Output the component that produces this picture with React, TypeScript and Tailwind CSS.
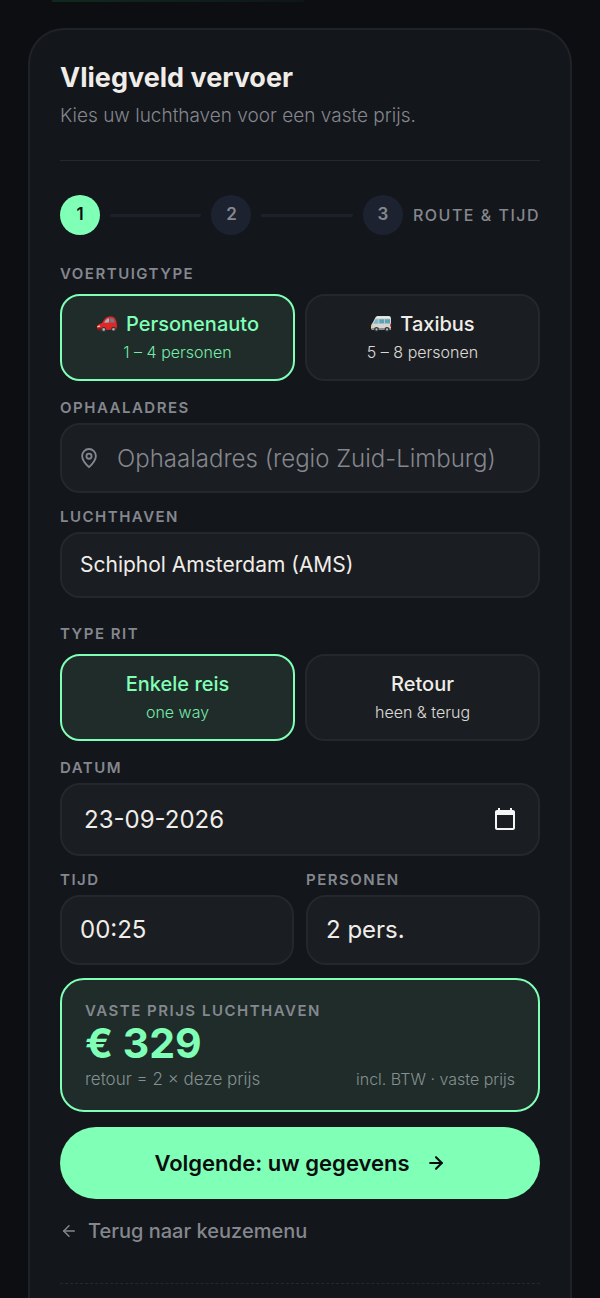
import React, { useState } from 'react';
import { ArrowLeft, ArrowRight } from 'lucide-react';

const airports = ['Schiphol Amsterdam (AMS)', 'Maastricht Aachen (MST)', 'Eindhoven (EIN)', 'Brussel (BRU)', 'Düsseldorf (DUS)'];
const times = ['00:25', '00:30', '00:35', '00:40'];
const labelClass = 'text-[15px] leading-5 font-semibold uppercase tracking-[1.5px] text-[#85878e]';
const fieldClass = 'w-full rounded-[20px] border-2 border-[#24272d] bg-[#1a1d22] text-[#f0ede8] outline-none focus:border-[#80ffb6]';

const PinIcon = () => (
  <svg
    viewBox="0 0 24 24"
    className="absolute top-6 left-[18px] h-[22px] w-[22px] text-[#85878e]"
    fill="none"
    stroke="currentColor"
    strokeWidth="2"
    aria-hidden="true"
  >
    <path d="M12 22s7.500-7.200 7.500-12.300a7.500 7.500 0 0 0-15 0C4.500 14.800 12 22 12 22z" strokeLinejoin="round" />
    <circle cx="12" cy="10" r="2.800" />
  </svg>
);

const CarIcon = () => (
  <svg viewBox="0 0 22 18" className="h-[18px] w-[22px]" aria-hidden="true">
    <path d="M1 12c.2-2.300 2.200-3.400 4.800-3.800C7.600 5.300 9.300 2.600 11.500 1.900c2.500-.7 5.300-.5 6.700.6 1.500 1.500 2.600 4.300 2.700 7.400 0 2-.2 3.800-.9 4.600L3 15.200c-1.500-.3-2.200-1.600-2-3.200z" fill="#e02626" />
    <path d="M8.300 7.800c.8-2 2-3.700 3.300-4.300l1.500-.3v4.400z" fill="#9fb4be" />
    <path d="M14.200 3.200c1.300-.1 2.600.1 3.300.7.700 1 1.200 2.300 1.400 3.500l-4.700.2z" fill="#6b7f8c" />
    <path d="M1.300 11l2.500-.5.4 1.300-2.900.5z" fill="#ffd9b8" />
    <path d="M1 13.300h4v1.800H2.500z" fill="#7d1719" />
    <circle cx="7.700" cy="14.500" r="2.600" fill="#33363a" />
    <circle cx="7.700" cy="14.500" r="1.400" fill="#a9adb0" />
    <circle cx="17.500" cy="14.200" r="2.400" fill="#33363a" />
    <circle cx="17.500" cy="14.200" r="1.300" fill="#a9adb0" />
  </svg>
);

const VanIcon = () => (
  <svg viewBox="0 0 22 18" className="h-[18px] w-[22px]" aria-hidden="true">
    <path d="M1 13c-.2-2 .3-3.700 1.500-5L5 3.200C5.500 1.800 6.500 1.200 8 1.200h11c1.300 0 2 .7 2 2V14l-1 1H3c-1.200 0-1.900-.7-2-2z" fill="#d6d5d2" />
    <path d="M3.300 8.800l2.200-4.600h3v4.600z" fill="#7fb9c8" />
    <path d="M9.300 4.200h4.900v4.200H9.300zM14.900 4.200H20v4.200h-5.100z" fill="#5ba3b5" />
    <path d="M7 1.200h12.500l.8 1.500H6z" fill="#f2f0ec" />
    <path d="M20 8.800h1.200v3H20z" fill="#de3434" />
    <path d="M1 10.200h1.800v1.600H1z" fill="#ffb35c" />
    <path d="M1 13h19.800v1.500L20 15H2.500z" fill="#8b8d8f" />
    <circle cx="6.500" cy="14.400" r="2.400" fill="#303336" />
    <circle cx="6.500" cy="14.400" r="1.100" fill="#b6babd" />
    <circle cx="17" cy="14.400" r="2.400" fill="#303336" />
    <circle cx="17" cy="14.400" r="1.100" fill="#b6babd" />
  </svg>
);

interface ChoiceProps {
  title: string;
  detail: string;
  icon?: React.ReactNode;
  active: boolean;
  onSelect: () => void;
}

const Choice: React.FC<ChoiceProps> = ({ title, detail, icon, active, onSelect }) => (
  <button
    type="button"
    aria-pressed={active}
    onClick={onSelect}
    className={`flex flex-1 flex-col items-center rounded-[20px] border-2 py-[13px] ${
      active ? 'border-[#80ffb6] bg-[#1f2c2a] text-[#80ffb6]' : 'border-[#24272d] bg-[#1a1d22] text-[#f0ede8]'
    }`}
  >
    <span className="flex items-center gap-2 text-[20px] leading-[30px] font-medium">
      {icon}
      {title}
    </span>
    <span className="text-[16px] leading-[27px] font-light opacity-90">{detail}</span>
  </button>
);

interface StepProps {
  number: number;
  active?: boolean;
}

const Step: React.FC<StepProps> = ({ number, active }) => (
  <span
    className={`flex h-10 w-10 shrink-0 items-center justify-center rounded-full text-[17px] font-semibold ${
      active ? 'bg-[#80ffb6] text-[#0b0d10]' : 'bg-[#1d2230] text-[#85878e]'
    }`}
  >
    {number}
  </span>
);

export default function App() {
  const [vehicle, setVehicle] = useState<'auto' | 'bus'>('auto');
  const [trip, setTrip] = useState<'single' | 'return'>('single');
  const [address, setAddress] = useState('');
  const [airport, setAirport] = useState(airports[0]);
  const [date, setDate] = useState('23-09-2026');
  const [time, setTime] = useState('00:25');
  const [persons, setPersons] = useState('2');

  return (
    <div className="flex min-h-screen flex-col bg-[#0d0e12] font-['Inter','Liberation_Sans',sans-serif]">
      <div className="ml-[52px] h-[2px] w-[42%] bg-linear-to-r from-[#10291f] to-[#0d1716]" />
      <main className="mx-7 mt-[26px] flex-1 rounded-t-[36px] border-2 border-b-0 border-[#1f2228] bg-[#13161b] px-[30px] pt-[30px]">
        <h1 className="text-[27px] leading-9 font-bold text-[#f0ede8]">Vliegveld vervoer</h1>
        <p className="mt-1 text-[19px] leading-8 font-light text-[#85878e]">Kies uw luchthaven voor een vaste prijs.</p>
        <hr className="mt-7 border-[#25282d]" />

        <div className="mt-[34px] flex items-center gap-[10px]">
          <Step number={1} active />
          <span className="h-[3px] flex-1 rounded bg-[#1d212b]" />
          <Step number={2} />
          <span className="h-[3px] flex-1 rounded bg-[#1d212b]" />
          <Step number={3} />
          <span className="text-[16px] leading-5 font-medium tracking-[1.5px] text-[#85878e] uppercase">Route &amp; tijd</span>
        </div>

        <form onSubmit={(e) => e.preventDefault()}>
          <div className="mt-[29px] flex flex-col gap-[10px]" role="group" aria-labelledby="vehicle-label">
            <span id="vehicle-label" className={labelClass}>Voertuigtype</span>
            <div className="flex gap-[10px]">
              <Choice title="Personenauto" detail="1 – 4 personen" icon={<CarIcon />} active={vehicle === 'auto'} onSelect={() => setVehicle('auto')} />
              <Choice title="Taxibus" detail="5 – 8 personen" icon={<VanIcon />} active={vehicle === 'bus'} onSelect={() => setVehicle('bus')} />
            </div>
          </div>

          <div className="mt-[17px] flex flex-col gap-[5px]">
            <label htmlFor="address" className={labelClass}>Ophaaladres</label>
            <div className="relative">
              <PinIcon />
              <input
                id="address"
                type="text"
                value={address}
                onChange={(e) => setAddress(e.target.value)}
                placeholder="Ophaaladres (regio Zuid-Limburg)"
                className={`${fieldClass} h-[70px] pr-4 pl-[55px] text-[24px] font-light placeholder:text-[#85878e]`}
              />
            </div>
          </div>

          <div className="mt-[14px] flex flex-col gap-[5px]">
            <label htmlFor="airport" className={labelClass}>Luchthaven</label>
            <select
              id="airport"
              value={airport}
              onChange={(e) => setAirport(e.target.value)}
              className={`${fieldClass} h-[66px] appearance-none px-[18px] text-[21px]`}
            >
              {airports.map((name) => (
                <option key={name}>{name}</option>
              ))}
            </select>
          </div>

          <div className="mt-[26px] flex flex-col gap-[10px]" role="group" aria-labelledby="trip-label">
            <span id="trip-label" className={labelClass}>Type rit</span>
            <div className="flex gap-[10px]">
              <Choice title="Enkele reis" detail="one way" active={trip === 'single'} onSelect={() => setTrip('single')} />
              <Choice title="Retour" detail="heen & terug" active={trip === 'return'} onSelect={() => setTrip('return')} />
            </div>
          </div>

          <div className="mt-[17px] flex flex-col gap-[5px]">
            <label htmlFor="date" className={labelClass}>Datum</label>
            <div className="relative">
              <input
                id="date"
                type="text"
                inputMode="numeric"
                value={date}
                onChange={(e) => setDate(e.target.value)}
                className={`${fieldClass} h-[73px] pr-16 pl-[22px] text-[24px]`}
              />
              <button type="button" aria-label="Kies datum" className="absolute top-6 right-[23px] text-[#f5f5f5]">
                <svg viewBox="0 0 24 24" className="h-6 w-6" fill="currentColor">
                  <path d="M20 3h-1V1h-2v2H7V1H5v2H4c-1.100 0-2 .9-2 2v16c0 1.100.9 2 2 2h16c1.100 0 2-.9 2-2V5c0-1.100-.9-2-2-2zm0 18H4V8h16v13z" />
                </svg>
              </button>
            </div>
          </div>

          <div className="mt-[14px] flex gap-3">
            <div className="flex flex-1 flex-col gap-[5px]">
              <label htmlFor="time" className={labelClass}>Tijd</label>
              <select
                id="time"
                value={time}
                onChange={(e) => setTime(e.target.value)}
                className={`${fieldClass} h-[70px] appearance-none px-[18px] text-[24px]`}
              >
                {times.map((t) => (
                  <option key={t}>{t}</option>
                ))}
              </select>
            </div>
            <div className="flex flex-1 flex-col gap-[5px]">
              <label htmlFor="persons" className={labelClass}>Personen</label>
              <select
                id="persons"
                value={persons}
                onChange={(e) => setPersons(e.target.value)}
                className={`${fieldClass} h-[70px] appearance-none px-[18px] text-[24px]`}
              >
                {['1', '2', '3', '4'].map((n) => (
                  <option key={n} value={n}>{n} pers.</option>
                ))}
              </select>
            </div>
          </div>

          <div className="mt-[13px] rounded-3xl border-2 border-[#80ffb6] bg-[#1f2c2a] px-[23px] pt-[21px] pb-[17px]">
            <p className={labelClass}>Vaste prijs luchthaven</p>
            <p className="text-[41px] leading-[44px] font-bold text-[#80ffb6]">€ 329</p>
            <div className="flex items-center justify-between leading-7 font-light text-[#85908f]">
              <span className="text-[17px]">retour = 2 × deze prijs</span>
              <span className="text-[16px]">incl. BTW · vaste prijs</span>
            </div>
          </div>

          <button type="submit" className="mt-[15px] flex h-[72px] w-full items-center justify-center gap-4 rounded-full bg-[#80ffb6] text-[22px] font-semibold text-[#0b0d10]">
            Volgende: uw gegevens
            <ArrowRight className="h-5 w-5" strokeWidth={2.5} />
          </button>
        </form>

        <a href="#keuzemenu" className="mt-4 inline-flex items-center gap-[10px] text-[20px] leading-8 font-medium text-[#85878e]">
          <ArrowLeft className="h-[18px] w-[18px]" strokeWidth={2} />
          Terug naar keuzemenu
        </a>
        <hr className="mt-9 border-dashed border-[#25282d]" />
      </main>
    </div>
  );
}
